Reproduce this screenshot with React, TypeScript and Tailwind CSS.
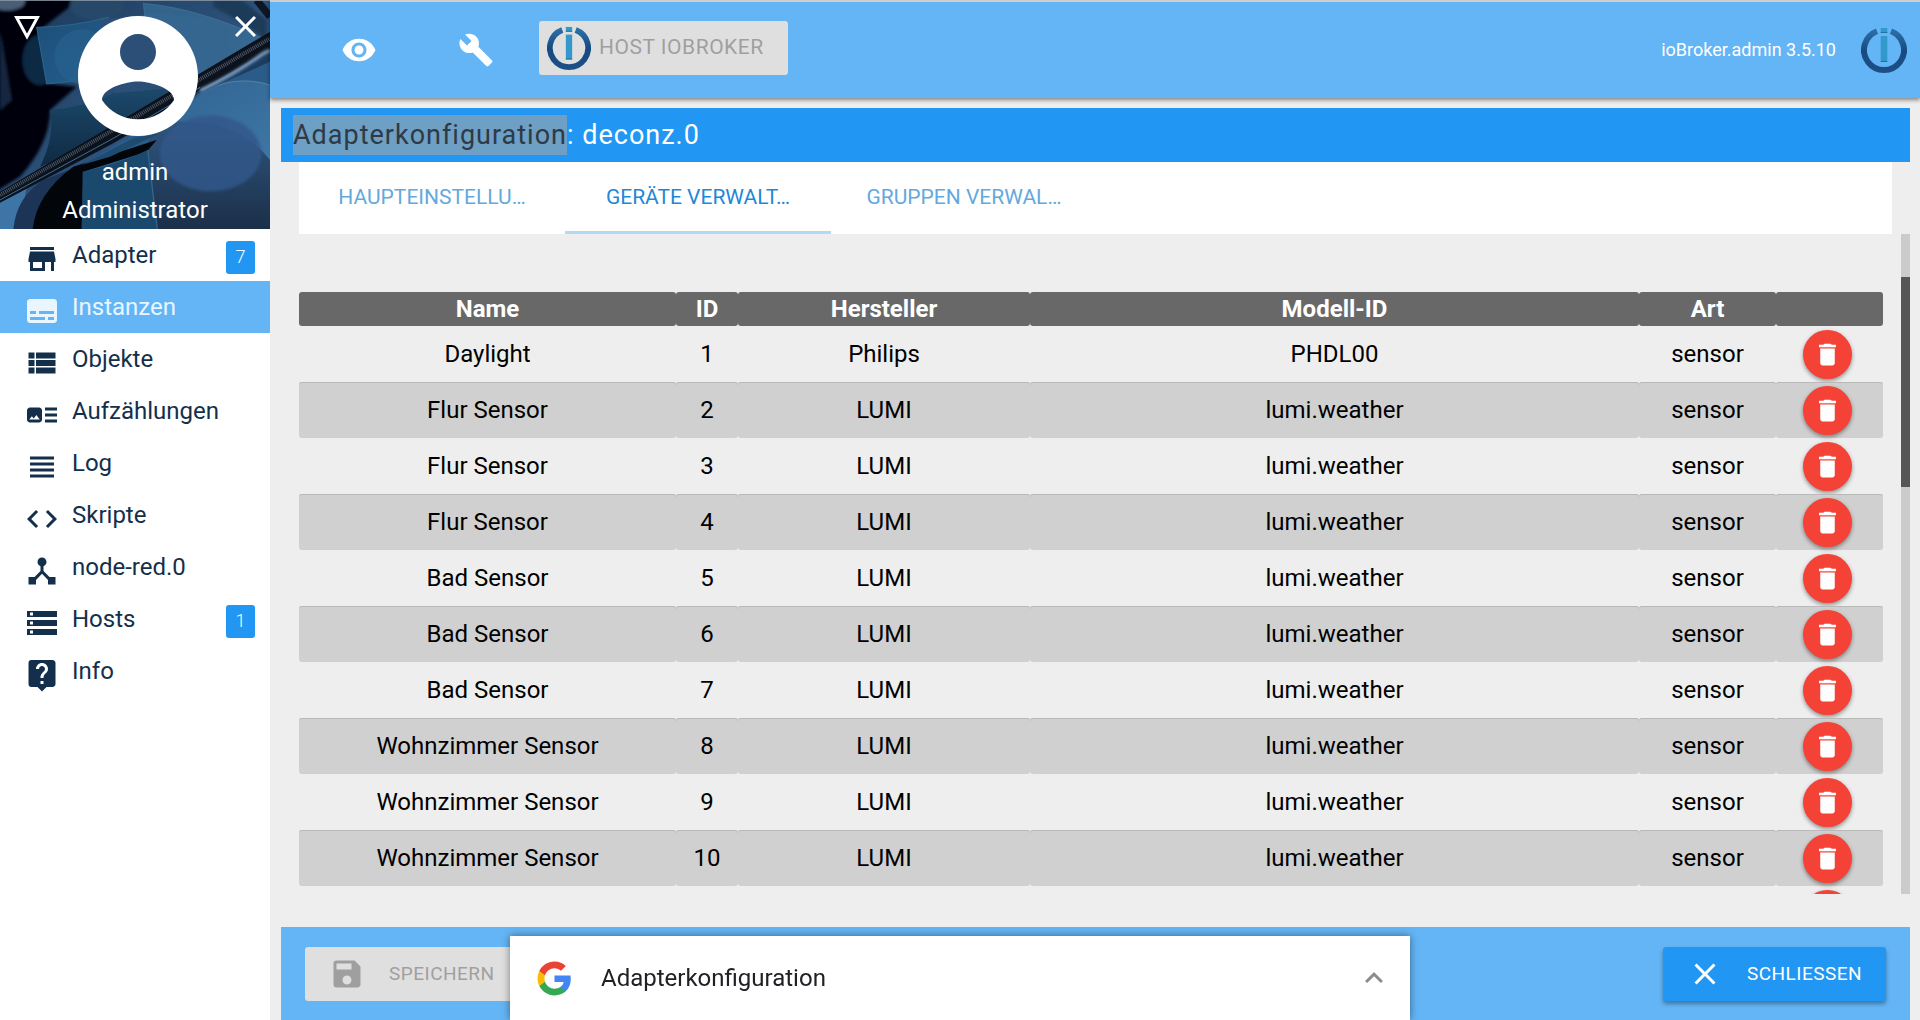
import { useState } from "react";
import type { IconType } from "react-icons";
import {
  MdArtTrack,
  MdBuild,
  MdClose,
  MdCode,
  MdDelete,
  MdDeviceHub,
  MdExpandLess,
  MdLiveHelp,
  MdSave,
  MdStorage,
  MdStore,
  MdSubtitles,
  MdViewHeadline,
  MdViewList,
  MdVisibility,
} from "react-icons/md";

interface MenuEntry {
  label: string;
  icon: IconType;
  badge?: number;
}

interface Device {
  id: number;
  name: string;
  vendor: string;
  model: string;
}

const MENU: MenuEntry[] = [
  { label: "Adapter", icon: MdStore, badge: 7 },
  { label: "Instanzen", icon: MdSubtitles },
  { label: "Objekte", icon: MdViewList },
  { label: "Aufzählungen", icon: MdArtTrack },
  { label: "Log", icon: MdViewHeadline },
  { label: "Skripte", icon: MdCode },
  { label: "node-red.0", icon: MdDeviceHub },
  { label: "Hosts", icon: MdStorage, badge: 1 },
  { label: "Info", icon: MdLiveHelp },
];

const TABS = ["HAUPTEINSTELLU…", "GERÄTE VERWALT…", "GRUPPEN VERWAL…"];

const lumi = (id: number, name: string): Device => ({ id, name, vendor: "LUMI", model: "lumi.weather" });

const DEVICES: Device[] = [
  { id: 1, name: "Daylight", vendor: "Philips", model: "PHDL00" },
  lumi(2, "Flur Sensor"),
  lumi(3, "Flur Sensor"),
  lumi(4, "Flur Sensor"),
  lumi(5, "Bad Sensor"),
  lumi(6, "Bad Sensor"),
  lumi(7, "Bad Sensor"),
  lumi(8, "Wohnzimmer Sensor"),
  lumi(9, "Wohnzimmer Sensor"),
  lumi(10, "Wohnzimmer Sensor"),
];

function BrokerLogo({ className }: { className?: string }) {
  return (
    <svg viewBox="0 0 46 46" className={className} aria-hidden="true">
      <defs>
        <linearGradient id="ring" x1="0" y1="0" x2="0" y2="1">
          <stop offset="0" stopColor="#2a6ea6" />
          <stop offset="0.5" stopColor="#174a80" />
          <stop offset="1" stopColor="#1b4f86" />
        </linearGradient>
      </defs>
      <path d="M16 4.2A20 20 0 1 0 30 4.2" fill="none" stroke="url(#ring)" strokeWidth="6" />
      <rect x="19.7" y="1" width="6.6" height="5" fill="#3399cc" />
      <rect x="19.7" y="9" width="6.6" height="26" fill="#3399cc" />
      <path d="M19.7 5.5h6.6M19.7 34.5h6.6" stroke="#23709f" />
    </svg>
  );
}

function GoogleLogo() {
  return (
    <svg viewBox="0 0 24 24" className="size-[37px]" aria-hidden="true">
      <path fill="#4285F4" d="M22.56 12.25c0-.78-.07-1.53-.2-2.25H12v4.26h5.92c-.26 1.37-1.04 2.53-2.21 3.31v2.77h3.57c2.08-1.92 3.28-4.74 3.28-8.09z" />
      <path fill="#34A853" d="M12 23c2.97 0 5.46-.98 7.28-2.66l-3.57-2.77c-.98.66-2.23 1.06-3.71 1.06-2.86 0-5.29-1.93-6.16-4.53H2.18v2.84C3.99 20.53 7.7 23 12 23z" />
      <path fill="#FBBC05" d="M5.84 14.09c-.22-.66-.35-1.36-.35-2.09s.13-1.43.35-2.09V7.07H2.18C1.43 8.55 1 10.22 1 12s.43 3.45 1.18 4.93l2.85-2.22.81-.62z" />
      <path fill="#EA4335" d="M12 5.38c1.62 0 3.06.56 4.21 1.64l3.15-3.15C17.45 2.09 14.97 1 12 1 7.7 1 3.99 3.47 2.18 7.07l3.66 2.84c.87-2.6 3.3-4.53 6.16-4.53z" />
    </svg>
  );
}

// blue glass panels behind the user's name
function Backdrop() {
  return (
    <svg viewBox="0 0 810 687" preserveAspectRatio="none" className="absolute inset-0 size-full" aria-hidden="true">
      <defs>
        <linearGradient id="base" x1="0" y1="0" x2="1" y2="1">
          <stop offset="0" stopColor="#1c3a59" />
          <stop offset="0.6" stopColor="#2f5580" />
          <stop offset="1" stopColor="#1c3450" />
        </linearGradient>
        <linearGradient id="panel" x1="0" y1="0" x2="1" y2="1">
          <stop offset="0" stopColor="#1d4f78" />
          <stop offset="1" stopColor="#23608f" />
        </linearGradient>
        <linearGradient id="deep" x1="0" y1="0" x2="0" y2="1">
          <stop offset="0" stopColor="#1d4c70" />
          <stop offset="1" stopColor="#0f2a42" />
        </linearGradient>
        <linearGradient id="lens" x1="0" y1="0" x2="1" y2="1">
          <stop offset="0" stopColor="#2f6391" />
          <stop offset="1" stopColor="#3f76a4" />
        </linearGradient>
        <linearGradient id="floor" x1="0" y1="0" x2="0" y2="1">
          <stop offset="0" stopColor="#2f5680" />
          <stop offset="1" stopColor="#1b2f48" />
        </linearGradient>
        <filter id="soft">
          <feGaussianBlur stdDeviation="5" />
        </filter>
      </defs>
      <rect width="810" height="687" fill="url(#base)" />
      <g filter="url(#soft)">
        <path d="M-20 -20H260L120 90 135 250 230 260 150 330Q150 430 60 530L-20 580Z" fill="#020509" />
        <ellipse cx="290" cy="15" rx="80" ry="45" fill="#27496b" />
        <ellipse cx="20" cy="5" rx="55" ry="26" fill="#4a5f78" />
        <path d="M0 90 35 300 0 330Z" fill="#12273f" />
        <ellipse cx="120" cy="180" rx="52" ry="75" fill="#0e2b45" />
      </g>
      <path d="M110 82Q220 80 325 52L395 225 140 252Z" fill="url(#panel)" stroke="#2f648f" strokeWidth="3" />
      <circle cx="245" cy="170" r="82" fill="#2a6290" opacity="0.6" />
      <path d="M150 330Q260 320 350 275L600 240V300L120 500Q165 410 150 330Z" fill="url(#deep)" />
      <path d="M300 60 460 40 660 60 700 160 560 260 345 280Z" fill="#2c4f78" />
      <path d="M430 10Q600 25 800 120L600 240 440 100Z" fill="#3c769f" opacity="0.6" stroke="#5c91b5" strokeWidth="2" />
      <path d="M640 -5H720L800 60V120Q720 60 640 20Z" fill="#1a3a58" filter="url(#soft)" />
      {/* lower right lens */}
      <path d="M240 500 580 290 810 170V687H240Z" fill="#2b5b88" />
      <path d="M440 400 600 285Q700 220 810 255V480Q720 360 520 365Z" fill="url(#lens)" />
      <path d="M590 285Q700 220 810 255" fill="none" stroke="#5583a8" strokeWidth="3" />
      <path d="M440 440Q460 370 540 367 700 355 810 480V687H470Z" fill="url(#floor)" />
      <ellipse cx="632" cy="460" rx="152" ry="114" fill="#31598a" opacity="0.85" filter="url(#soft)" />
      {/* bottom left glass and shadow */}
      <path d="M0 590 80 560 60 687H0Z" fill="#3d76a6" />
      <path d="M40 687Q50 590 130 540L260 490V687Z" fill="#1c3557" />
      <path d="M98 687Q110 580 220 500L470 420 440 455 250 515 245 687Z" fill="#020509" />
      <path d="M248 515Q350 495 443 450L472 687H245Z" fill="#1b496e" />
      <path d="M443 450 472 687" stroke="#34658d" strokeWidth="4" />
      <path d="M245 495 400 415 480 400 330 470Z" fill="#1f4b70" />
      {/* dark textured rail running across */}
      <path d="M0 575 340 375 810 95V150L340 430 0 608Z" fill="#0b121c" />
      <path d="M0 585 340 390 810 115" fill="none" stroke="#4d5866" strokeWidth="12" strokeDasharray="3 3" />
      <path d="M400 385 810 150V185L600 280 420 372Z" fill="#1d3d60" />
      <path d="M600 272Q700 225 790 160L810 150" fill="none" stroke="#8fb0d6" strokeWidth="9" filter="url(#soft)" />
      <path d="M0 600 340 415 600 262" fill="none" stroke="#3f6d97" strokeWidth="3" />
      <path d="M770 0 810 50" stroke="#0d1622" strokeWidth="22" />
      <path d="M0 1H810" stroke="#8d99a5" strokeWidth="3" />
    </svg>
  );
}

function Sidebar({ active, onSelect }: { active: string; onSelect: (label: string) => void }) {
  return (
    <aside className="w-[270px] shrink-0 bg-white text-2xl text-[#142f4b]">
      <div className="relative text-white">
        <Backdrop />
        <div className="relative flex items-start justify-between px-3.5 pt-4">
          <button aria-label="Thema wechseln">
            <svg viewBox="0 0 26 24" className="h-6 w-[26px]" aria-hidden="true">
              <path d="M2.6 1.5H23.4L13 20.6Z" fill="none" stroke="currentColor" strokeWidth="3" />
            </svg>
          </button>
          <svg viewBox="2 2 20 20" className="size-[120px]" aria-hidden="true">
            <path
              fill="currentColor"
              d="M12 2C6.48 2 2 6.48 2 12s4.48 10 10 10 10-4.48 10-10S17.52 2 12 2zm0 3c1.66 0 3 1.34 3 3s-1.34 3-3 3-3-1.34-3-3 1.34-3 3-3zm0 14.2c-2.5 0-4.71-1.28-6-3.22.03-1.99 4-3.08 6-3.08 1.99 0 5.97 1.09 6 3.08-1.29 1.94-3.5 3.22-6 3.22z"
            />
          </svg>
          <button aria-label="Menü schließen">
            <svg viewBox="5 5 14 14" className="size-[21px]" aria-hidden="true">
              <path fill="currentColor" d="M19 6.41L17.59 5 12 10.59 6.41 5 5 6.41 10.59 12 5 17.59 6.41 19 12 13.41 17.59 19 19 17.59 13.41 12z" />
            </svg>
          </button>
        </div>
        <div className="relative pt-[17px] text-center leading-[38px]">
          <div>admin</div>
          <div>Administrator</div>
        </div>
      </div>

      <nav>
        {MENU.map(({ label, icon: Icon, badge }) => (
          <a
            key={label}
            href="#"
            onClick={() => onSelect(label)}
            className={`flex h-[52px] items-center pr-[15px] pl-6 ${label === active ? "bg-[#64b5f6] text-[#e9f6ff]" : ""}`}
          >
            <Icon className="mt-2 size-9" />
            <span className="ml-3 flex-1">{label}</span>
            {badge && (
              <span className="mt-1 flex h-[33px] w-[29px] items-center justify-center rounded-[3px] bg-[#2196f3] text-lg font-light text-white">
                {badge}
              </span>
            )}
          </a>
        ))}
      </nav>
    </aside>
  );
}

function TopBar() {
  return (
    <header className="relative flex h-[98px] shrink-0 items-center border-t-2 border-[#cfcfcf] bg-[#64b5f6] pr-[13px] pl-[30px] text-white shadow-[0_2px_4px_rgba(0,0,0,0.45)]">
      <button aria-label="Ansicht" className="flex w-[117px] justify-center">
        <MdVisibility className="size-9" />
      </button>
      <button aria-label="Einstellungen" className="flex w-[117px] justify-center">
        <MdBuild className="size-9" />
      </button>
      <button disabled className="mb-1 ml-[5px] flex h-[54px] items-center rounded-[3px] bg-[#dfdfdf] pr-6 pl-2 text-[21px] tracking-wide text-[#9f9f9f]">
        <BrokerLogo className="mr-2 size-11" />
        HOST IOBROKER
      </button>
      <span className="ml-auto text-lg">ioBroker.admin 3.5.10</span>
      <BrokerLogo className="ml-[25px] size-[46px]" />
    </header>
  );
}

function DeleteButton({ label }: { label: string }) {
  return (
    <button
      aria-label={label}
      className="mx-auto flex size-[49px] items-center justify-center rounded-full bg-[#f44336] text-white shadow-[0_2px_4px_rgba(0,0,0,0.4)]"
    >
      <MdDelete className="size-[29px]" />
    </button>
  );
}

function DeviceTable() {
  return (
    <table className="w-full table-fixed border-separate border-spacing-0 text-center text-2xl text-black">
      <colgroup>
        <col className="w-[377px]" />
        <col className="w-[62px]" />
        <col className="w-[292px]" />
        <col />
        <col className="w-[137px]" />
        <col className="w-[107px]" />
      </colgroup>
      <thead>
        <tr className="h-[34px] text-white [&>th]:rounded-[3px] [&>th]:bg-[#686868] [&>th]:p-0 [&>th]:font-bold">
          <th>Name</th>
          <th>ID</th>
          <th>Hersteller</th>
          <th>Modell-ID</th>
          <th>Art</th>
          <th aria-label="Aktion" />
        </tr>
      </thead>
      <tbody>
        {DEVICES.map(d => (
          <tr
            key={d.id}
            className="h-14 even:[&>td]:bg-[#d0d0d0] even:[&>td]:shadow-[inset_0_1px_0_#b8b8b8] [&>td]:rounded-[3px] [&>td]:p-0 [&>td:last-child]:pr-1"
          >
            <td>{d.name}</td>
            <td>{d.id}</td>
            <td>{d.vendor}</td>
            <td>{d.model}</td>
            <td>sensor</td>
            <td>
              <DeleteButton label={`${d.name} ${d.id} löschen`} />
            </td>
          </tr>
        ))}
        <tr className="h-14">
          <td colSpan={5} />
          <td className="p-0 pr-1">
            <DeleteButton label="Nächstes Gerät löschen" />
          </td>
        </tr>
      </tbody>
    </table>
  );
}

export default function App() {
  const [menu, setMenu] = useState("Instanzen");
  const [tab, setTab] = useState(1);

  return (
    <div className="flex h-screen overflow-hidden bg-[#eeeeee] font-[Roboto,sans-serif]">
      <Sidebar active={menu} onSelect={setMenu} />

      <div className="flex min-w-0 flex-1 flex-col">
        <TopBar />

        <main className="mt-2.5 mr-2.5 ml-[11px] flex min-h-0 flex-1 flex-col">
          <h1 className="flex h-[54px] shrink-0 items-center bg-[#2196f3] px-3 text-[27px] tracking-[1px] text-white">
            <mark className="bg-[#6e9fc4] text-[#2f3a44]">Adapterkonfiguration</mark>: deconz.0
          </h1>

          <div role="tablist" className="mx-[18px] flex h-[72px] shrink-0 bg-white text-[21px]">
            {TABS.map((label, i) => (
              <button
                key={label}
                role="tab"
                aria-selected={i === tab}
                onClick={() => setTab(i)}
                className={`w-[266px] border-b-[3px] pt-0.5 ${i === tab ? "border-[#b3d8f2] text-[#1e88d8]" : "border-transparent text-[#64a9dc]"}`}
              >
                {label}
              </button>
            ))}
          </div>

          <div className="mb-[33px] flex min-h-0 flex-1 gap-[18px] pl-[18px]">
            <div className="min-w-0 flex-1 overflow-hidden pt-[58px]">
              <DeviceTable />
            </div>
            {/* scrollbar */}
            <div className="w-[9px] bg-[#cbcbcb] pt-[43px]">
              <div className="h-[210px] bg-[#565656]" />
            </div>
          </div>

          <footer className="flex h-[93px] shrink-0 items-start justify-between bg-[#64b5f6] px-6 pt-5 text-[19px] tracking-wide">
            <button disabled className="flex h-[54px] items-center gap-6 rounded-[3px] bg-[#dfdfdf] px-6 text-[#9f9f9f]">
              <MdSave className="size-9" />
              SPEICHERN
            </button>
            <button className="flex h-[54px] items-center gap-6 rounded-[3px] bg-[#2196f3] px-6 text-white shadow-[0_3px_4px_rgba(0,0,0,0.35)]">
              <MdClose className="size-9" />
              SCHLIESSEN
            </button>
          </footer>
        </main>
      </div>

      {/* search sheet of the browser, lies over the page */}
      <div className="fixed bottom-0 left-1/2 flex h-[84px] w-[900px] -translate-x-1/2 items-center bg-white pr-[18px] pl-[26px] text-2xl text-[#202124] shadow-[0_0_8px_rgba(0,0,0,0.45)]">
        <GoogleLogo />
        <span className="ml-7 flex-1">Adapterkonfiguration</span>
        <button aria-label="Suche öffnen" className="text-[#8c8c8c]">
          <MdExpandLess className="size-9" />
        </button>
      </div>
    </div>
  );
}
